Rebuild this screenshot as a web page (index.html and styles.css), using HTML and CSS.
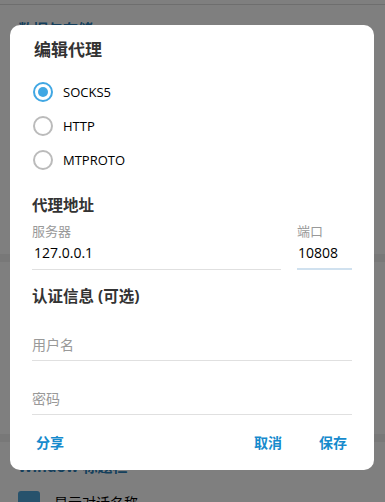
FILE: index.html
```html
<!DOCTYPE html>
<html lang="zh">
<head>
    <meta charset="UTF-8">
    <meta name="viewport" content="width=device-width, initial-scale=1.0">
    <title>编辑代理</title>
    <link rel="stylesheet" href="styles.css">
</head>
<body>
    <div class="page">
        <div class="topbar"></div>
        <div class="section">
            <div class="section-title">数据与存储</div>
            <div class="filler"></div>
        </div>
        <div class="divider"></div>
        <div class="section">
            <div class="filler short"></div>
        </div>
        <div class="divider"></div>
        <div class="section">
            <div class="section-title">Window 标题栏</div>
            <div class="check-row">
                <span class="check"></span>
                <span>显示对话名称</span>
            </div>
        </div>
    </div>

    <div class="overlay">
        <div class="dialog">
            <div class="dialog-title">编辑代理</div>

            <div class="radios">
                <label class="radio checked"><span class="dot"></span>SOCKS5</label>
                <label class="radio"><span class="dot"></span>HTTP</label>
                <label class="radio"><span class="dot"></span>MTPROTO</label>
            </div>

            <div class="group-title">代理地址</div>
            <div class="address">
                <div class="field server">
                    <div class="field-label">服务器</div>
                    <div class="field-value">127.0.0.1</div>
                </div>
                <div class="field port">
                    <div class="field-label">端口</div>
                    <div class="field-value">10808</div>
                </div>
            </div>

            <div class="group-title auth">认证信息 (可选)</div>
            <div class="field plain first">
                <div class="field-placeholder">用户名</div>
            </div>
            <div class="field plain">
                <div class="field-placeholder">密码</div>
            </div>

            <div class="buttons">
                <span class="btn">分享</span>
                <span class="spacer"></span>
                <span class="btn">取消</span>
                <span class="btn">保存</span>
            </div>
        </div>
    </div>
</body>
</html>
```

FILE: styles.css
```css
body {
    margin: 0;
    font-family: "Open Sans", "Noto Sans CJK SC", sans-serif;
    background-color: #fff;
    overflow: hidden;
}
.page {
    height: 502px;
}
.topbar {
    height: 4px;
    border-bottom: 1px solid #ddd;
}
.section {
    padding: 0 18px;
}
.section-title {
    color: #2a7fb8;
    font-size: 15px;
    font-weight: bold;
    padding-top: 13px;
    height: 24px;
}
.filler {
    height: 212px;
}
.filler.short {
    height: 172px;
}
.divider {
    height: 8px;
    background-color: #f0f0f0;
}
.check-row {
    display: flex;
    align-items: center;
    gap: 14px;
    margin-top: 12px;
    font-size: 14px;
    color: #000;
}
.check {
    width: 22px;
    height: 22px;
    border-radius: 3px;
    background-color: #4ea4d9;
}
.overlay {
    position: fixed;
    top: 0;
    left: 0;
    right: 0;
    bottom: 0;
    background-color: rgba(0,0,0,0.5);
    padding: 25px 11px 0 10px;
}
.dialog {
    background-color: white;
    border-radius: 10px;
    height: 445px;
    padding: 14px 22px 0 22px;
    box-sizing: border-box;
}
.dialog-title {
    font-size: 17px;
    font-weight: bold;
    color: #333;
    padding-left: 2px;
    line-height: 22px;
}
.radios {
    margin-top: 14px;
}
.radio {
    display: flex;
    align-items: center;
    height: 34px;
    font-size: 13px;
    color: #000;
}
.dot {
    width: 16px;
    height: 16px;
    border: 2px solid #bbb;
    border-radius: 50%;
    margin: 0 10px 0 1px;
    box-sizing: content-box;
    display: flex;
    align-items: center;
    justify-content: center;
}
.radio.checked .dot {
    border-color: #40a7e3;
}
.radio.checked .dot::after {
    content: "";
    width: 10px;
    height: 10px;
    border-radius: 50%;
    background-color: #40a7e3;
}
.group-title {
    font-size: 15.5px;
    font-weight: bold;
    color: #333;
    margin-top: 18px;
    line-height: 20px;
}
.group-title.auth {
    margin-top: 16px;
}
.address {
    display: flex;
    gap: 16px;
}
.field {
    border-bottom: 1px solid #e0e0e0;
}
.server {
    flex: 1;
}
.port {
    width: 55px;
    border-bottom: 2px solid #d0e1ef;
}
.field-label {
    font-size: 13px;
    color: #999;
    line-height: 18px;
    margin-top: 7px;
}
.field-value {
    font-size: 14px;
    color: #000;
    line-height: 20px;
    padding: 3px 0 6px 2px;
}
.port .field-value {
    padding-left: 1px;
    padding-bottom: 5px;
}
.field.plain {
    height: 31px;
    margin-top: 22px;
}
.field.plain.first {
    margin-top: 23px;
}
.field-placeholder {
    font-size: 14px;
    color: #999;
    line-height: 20px;
    padding-top: 6px;
}
.buttons {
    display: flex;
    align-items: center;
    margin-top: 17px;
    font-size: 14px;
}
.spacer {
    flex: 1;
}
.btn {
    color: #168acd;
    font-weight: bold;
    padding: 0 5px 0 4px;
}
.btn + .btn {
    margin-left: 28px;
}
```
